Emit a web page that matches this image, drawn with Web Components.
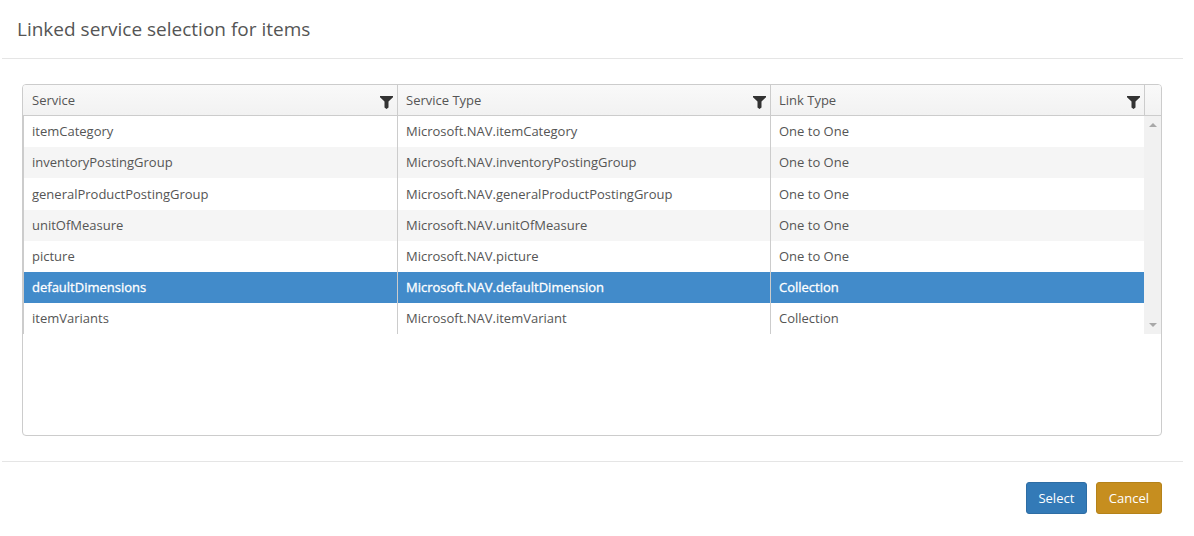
<!DOCTYPE html>
<html>
<head>
<meta charset="utf-8">
<title>Linked service selection</title>
<style>
    html, body { margin: 0; padding: 0; background: #fff; }
</style>
</head>
<body>
<service-dialog heading="Linked service selection for items">
    <service-grid></service-grid>
    <action-button slot="footer" kind="primary">Select</action-button>
    <action-button slot="footer" kind="warning">Cancel</action-button>
</service-dialog>

<script>
const ROWS = [
    ['itemCategory', 'Microsoft.NAV.itemCategory', 'One to One'],
    ['inventoryPostingGroup', 'Microsoft.NAV.inventoryPostingGroup', 'One to One'],
    ['generalProductPostingGroup', 'Microsoft.NAV.generalProductPostingGroup', 'One to One'],
    ['unitOfMeasure', 'Microsoft.NAV.unitOfMeasure', 'One to One'],
    ['picture', 'Microsoft.NAV.picture', 'One to One'],
    ['defaultDimensions', 'Microsoft.NAV.defaultDimension', 'Collection'],
    ['itemVariants', 'Microsoft.NAV.itemVariant', 'Collection']
];

class ServiceDialog extends HTMLElement {
    constructor() {
        super();
        this.attachShadow({ mode: 'open' });
    }

    connectedCallback() {
        this.shadowRoot.innerHTML = `
            <style>
                :host {
                    display: block;
                    width: 1181px;
                    margin-left: 2px;
                    font-family: "Open Sans", sans-serif;
                    color: #555;
                }
                header {
                    height: 59px;
                    box-sizing: border-box;
                    padding: 17px 0 0 15px;
                    border-bottom: 1px solid #e5e5e5;
                    font-size: 19px;
                    line-height: 24px;
                }
                main {
                    padding: 25px 21px 25px 20px;
                }
                footer {
                    display: flex;
                    justify-content: flex-end;
                    gap: 9px;
                    padding: 20px 21px 0 0;
                    border-top: 1px solid #e5e5e5;
                }
            </style>
            <header>${this.getAttribute('heading')}</header>
            <main><slot></slot></main>
            <footer><slot name="footer"></slot></footer>
        `;
    }
}

class FilterIcon extends HTMLElement {
    constructor() {
        super();
        this.attachShadow({ mode: 'open' });
        this.shadowRoot.innerHTML = `
            <style>
                :host { display: block; width: 13px; height: 14px; margin-top: 3px; }
                svg { display: block; }
            </style>
            <svg width="13" height="14" viewBox="0 0 13 14">
                <path fill="#333" d="M0 1h13v1.2L8.5 6.5V12.5L6.5 14 4.5 12.5V6.5L0 2.2z"/>
            </svg>
        `;
    }
}

class GridRow extends HTMLElement {
    constructor() {
        super();
        this.attachShadow({ mode: 'open' });
    }

    connectedCallback() {
        this.shadowRoot.innerHTML = `
            <style>
                :host {
                    display: grid;
                    grid-template-columns: 374px 373px 373px;
                    height: 31.2px;
                    font-size: 13px;
                    color: #555;
                }
                :host([alt]) { background: #f5f5f5; }
                :host([selected]) { background: #428bca; color: #fff; -webkit-text-stroke: 0.3px #fff; }
                div {
                    box-sizing: border-box;
                    padding: 0 8px;
                    line-height: var(--row-line, 31.4px);
                    border-right: 1px solid #ccc;
                    white-space: nowrap;
                    overflow: hidden;
                }
                div:last-child { border-right: 0; }
            </style>
            ${[0, 1, 2].map(i => `<div><slot name="c${i}"></slot></div>`).join('')}
        `;
    }
}

class GridScrollbar extends HTMLElement {
    constructor() {
        super();
        this.attachShadow({ mode: 'open' });
        this.shadowRoot.innerHTML = `
            <style>
                :host {
                    display: flex;
                    flex-direction: column;
                    justify-content: space-between;
                    align-items: center;
                    box-sizing: border-box;
                    width: 17px;
                    padding: 7px 0;
                    background: #f1f1f1;
                }
                i { width: 0; height: 0; border: 4px solid transparent; }
                .up { border-top: 0; border-bottom-color: #a8a8a8; }
                .down { border-bottom: 0; border-top-color: #a8a8a8; }
            </style>
            <i class="up"></i><i class="down"></i>
        `;
    }
}

class ServiceGrid extends HTMLElement {
    constructor() {
        super();
        this.attachShadow({ mode: 'open' });
    }

    connectedCallback() {
        const heads = ['Service', 'Service Type', 'Link Type'];
        this.shadowRoot.innerHTML = `
            <style>
                :host {
                    display: block;
                    box-sizing: border-box;
                    width: 1140px;
                    height: 352px;
                    border: 1px solid #ccc;
                    border-radius: 4px;
                    overflow: hidden;
                    background: #fff;
                }
                .head {
                    display: grid;
                    grid-template-columns: 375px 373px 374px 1fr;
                    height: 31px;
                    box-sizing: border-box;
                    border-bottom: 1px solid #ccc;
                    background: linear-gradient(#f9f9f9, #f2f2f2);
                    font-size: 13px;
                    color: #555;
                }
                .head > div {
                    display: flex;
                    align-items: center;
                    justify-content: space-between;
                    box-sizing: border-box;
                    padding: 0 4px 0 8px;
                    border-right: 1px solid #ccc;
                }
                .head > div:first-child { padding-left: 9px; }
                .head > div:last-child { border-right: 0; padding: 0; }
                .body {
                    display: flex;
                }
                .rows { box-sizing: border-box; width: 1121px; border-left: 1px solid #ccc; }
                grid-row:nth-of-type(3) { --row-line: 33px; }
            </style>
            <div class="head">
                ${heads.map(h => `<div><span>${h}</span><filter-icon></filter-icon></div>`).join('')}
                <div></div>
            </div>
            <div class="body">
                <div class="rows">
                    ${ROWS.map((r, i) => `
                        <grid-row ${i % 2 ? 'alt' : ''} ${i === 5 ? 'selected' : ''}>
                            ${r.map((t, c) => `<span slot="c${c}">${t}</span>`).join('')}
                        </grid-row>`).join('')}
                </div>
                <grid-scrollbar></grid-scrollbar>
            </div>
        `;
    }
}

class ActionButton extends HTMLElement {
    constructor() {
        super();
        this.attachShadow({ mode: 'open' });
        this.shadowRoot.innerHTML = `
            <style>
                :host {
                    display: block;
                    box-sizing: border-box;
                    height: 32px;
                    padding: 0 11.5px;
                    border: 1px solid;
                    border-radius: 3px;
                    font-size: 13px;
                    line-height: 30px;
                    color: #fff;
                }
                :host([kind="primary"]) { background: #337ab7; border-color: #2e6da4; }
                :host([kind="warning"]) { background: #c68e1f; border-color: #b58219; padding: 0 12px; }
            </style>
            <slot></slot>
        `;
    }
}

customElements.define('filter-icon', FilterIcon);
customElements.define('grid-row', GridRow);
customElements.define('grid-scrollbar', GridScrollbar);
customElements.define('service-grid', ServiceGrid);
customElements.define('action-button', ActionButton);
customElements.define('service-dialog', ServiceDialog);
</script>
</body>
</html>
